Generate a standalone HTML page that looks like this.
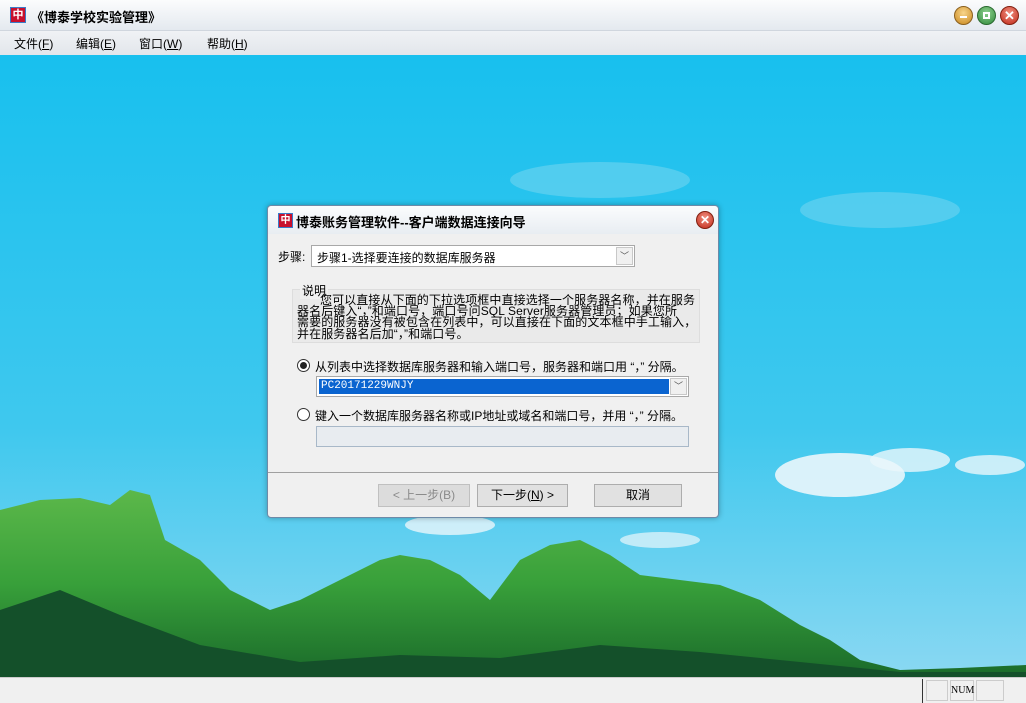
<!DOCTYPE html>
<html><head><meta charset="utf-8"><style>
*{margin:0;padding:0;box-sizing:border-box}
body{width:1026px;height:703px;overflow:hidden;font-family:"Liberation Sans","Noto Sans CJK SC",sans-serif;font-size:12px;color:#000;position:relative;background:#f0f0f0}
.abs{position:absolute}
#title{left:0;top:0;width:1026px;height:31px;background:linear-gradient(#fbfcfd,#e4e9ef);border-bottom:1px solid #d0d6de}
#menu{left:0;top:31px;width:1026px;height:24px;background:linear-gradient(#f0f2f5,#e2e6eb)}
#menu span{position:absolute;top:4px;font-size:12px}
#bg{left:0;top:55px;width:1026px;height:622px;overflow:hidden}
#status{left:0;top:677px;width:1026px;height:26px;background:#f0f0f0;border-top:1px solid #ccc}
.circ{position:absolute;top:6px;width:19px;height:19px;border-radius:50%}
#dlg{left:267px;top:205px;width:452px;height:313px;background:#f0f0f0;border:1px solid #6e8aa8;border-radius:4px;box-shadow:0 0 6px rgba(0,0,0,.3)}
#dlgtitle{left:0;top:0;width:450px;height:28px;background:linear-gradient(#fbfcfd,#e8edf2);border-radius:4px 4px 0 0}
.combo{position:absolute;background:#fff;border:1px solid #a8a8a8}
.dd{position:absolute;right:1px;top:1px;width:17px;background:#f0f0f0;border:1px solid #c8c8c8;font-size:9px;text-align:center;color:#555}
.btn{position:absolute;top:278px;height:23px;border:1px solid #adadad;background:#e1e1e1;text-align:center;line-height:21px;font-size:12px}
.radio{position:absolute;width:13px;height:13px;border:1px solid #333;border-radius:50%;background:#fff}
.ln{position:absolute;white-space:nowrap;font-size:12px;line-height:12px;letter-spacing:.1px}
</style></head><body>
<div id="title" class="abs">
 <div class="abs" style="left:10px;top:7px;width:16px;height:16px;background:#c8102e;border:1px solid #3a7bc8;color:#fff;font-size:11px;line-height:14px;text-align:center;font-weight:bold">中</div>
 <div class="abs" style="left:31px;top:7px;font-size:13px;font-weight:bold">《博泰学校实验管理》</div>
 <div class="circ" style="left:954px;background:radial-gradient(circle at 50% 35%,#f8d58a,#c8861c);border:1px solid #8a6020"><div style="position:absolute;left:5px;top:9px;width:7px;height:2px;background:#fff"></div></div>
 <div class="circ" style="left:977px;background:radial-gradient(circle at 50% 35%,#8fd08f,#2f8a3a);border:1px solid #2a6a30"><div style="position:absolute;left:5px;top:5px;width:7px;height:7px;border:2px solid #fff"></div></div>
 <div class="circ" style="left:1000px;background:radial-gradient(circle at 50% 35%,#f09080,#c02818);border:1px solid #802010;color:#fff;font-size:13px;font-weight:bold;text-align:center;line-height:17px">✕</div>
</div>
<div id="menu" class="abs">
 <span style="left:14px">文件(<u>F</u>)</span><span style="left:76px">编辑(<u>E</u>)</span><span style="left:139px">窗口(<u>W</u>)</span><span style="left:207px">帮助(<u>H</u>)</span>
</div>
<div id="bg" class="abs">
<svg width="1026" height="622" viewBox="0 55 1026 622">
<defs>
<linearGradient id="sky" x1="0" y1="0" x2="0" y2="1"><stop offset="0" stop-color="#18c0ee"/><stop offset=".6" stop-color="#3fc8ee"/><stop offset="1" stop-color="#8ad8f2"/></linearGradient>
<linearGradient id="m" x1="0" y1="0" x2="0" y2="1"><stop offset="0" stop-color="#5cb84a"/><stop offset=".5" stop-color="#38a03a"/><stop offset="1" stop-color="#1a6a2a"/></linearGradient>
</defs>
<rect x="0" y="55" width="1026" height="622" fill="url(#sky)"/>
<ellipse cx="840" cy="475" rx="65" ry="22" fill="#eaf6fb" opacity=".9"/>
<ellipse cx="910" cy="460" rx="40" ry="12" fill="#eaf6fb" opacity=".8"/>
<ellipse cx="990" cy="465" rx="35" ry="10" fill="#eaf6fb" opacity=".8"/>
<ellipse cx="450" cy="525" rx="45" ry="10" fill="#eaf6fb" opacity=".8"/>
<ellipse cx="660" cy="540" rx="40" ry="8" fill="#eaf6fb" opacity=".7"/>
<ellipse cx="600" cy="180" rx="90" ry="18" fill="#6fd4f0" opacity=".6"/>
<ellipse cx="880" cy="210" rx="80" ry="18" fill="#6fd4f0" opacity=".6"/>
<path d="M0 510 L40 500 L80 498 L110 505 L130 490 L150 495 L165 540 L200 560 L230 590 L270 610 L300 600 L330 585 L360 570 L380 560 L400 555 L430 560 L460 575 L490 600 L520 560 L550 545 L580 540 L610 555 L640 575 L680 580 L720 585 L760 600 L800 625 L830 640 L860 660 L900 670 L960 668 L1026 665 L1026 677 L0 677 Z" fill="url(#m)"/>
<path d="M0 610 L60 590 L120 615 L200 645 L300 662 L400 655 L500 658 L600 645 L700 652 L800 662 L900 672 L1026 672 L1026 677 L0 677Z" fill="#14502a"/>
</svg>
</div>
<div id="dlg" class="abs">
 <div id="dlgtitle" class="abs">
  <div class="abs" style="left:10px;top:7px;width:15px;height:15px;background:#c8102e;border:1px solid #3a7bc8;color:#fff;font-size:10px;line-height:13px;text-align:center;font-weight:bold">中</div>
  <div class="abs" style="left:28px;top:6px;font-size:13px;font-weight:bold">博泰账务管理软件--客户端数据连接向导</div>
  <div class="circ" style="left:428px;top:5px;width:18px;height:18px;background:radial-gradient(circle at 50% 35%,#f09080,#c02818);border:1px solid #802010;color:#fff;font-size:12px;font-weight:bold;text-align:center;line-height:16px">✕</div>
 </div>
 <div class="abs" style="left:10px;top:42px">步骤:</div>
 <div class="combo" style="left:43px;top:39px;width:324px;height:22px"><span style="position:absolute;left:5px;top:3px">步骤1-选择要连接的数据库服务器</span><div class="dd" style="height:18px;line-height:16px">﹀</div></div>
 <div class="abs" style="left:24px;top:83px;width:408px;height:54px;border:1px solid #ddd;background:#eaeaea"></div>
 <div class="abs" style="left:32px;top:76px;background:#f0f0f0;padding:0 2px">说明</div>
 <div class="ln" style="left:52px;top:88px">您可以直接从下面的下拉选项框中直接选择一个服务器名称，并在服务</div>
 <div class="ln" style="left:29px;top:99px">器名后键入“，”和端口号，端口号问SQL Server服务器管理员；如果您所</div>
 <div class="ln" style="left:29px;top:110px">需要的服务器没有被包含在列表中，可以直接在下面的文本框中手工输入，</div>
 <div class="ln" style="left:29px;top:122px">并在服务器名后加“，”和端口号。</div>
 <div class="radio" style="left:29px;top:153px"><div style="position:absolute;left:2px;top:2px;width:7px;height:7px;border-radius:50%;background:#222"></div></div>
 <div class="abs" style="left:47px;top:152px;white-space:nowrap">从列表中选择数据库服务器和输入端口号，服务器和端口用 “，” 分隔。</div>
 <div class="combo" style="left:48px;top:170px;width:373px;height:21px"><div style="position:absolute;left:2px;top:2px;width:350px;height:15px;background:#0a64d0;color:#fff;font-family:'Liberation Mono',monospace;font-size:11px;line-height:15px;padding-left:2px">PC20171229WNJY</div><div class="dd" style="height:17px;line-height:15px">﹀</div></div>
 <div class="radio" style="left:29px;top:202px"></div>
 <div class="abs" style="left:47px;top:201px;white-space:nowrap">键入一个数据库服务器名称或IP地址或域名和端口号，并用 “，” 分隔。</div>
 <div class="abs" style="left:48px;top:220px;width:373px;height:21px;border:1px solid #a8b8c8;background:#e8ecf0"></div>
 <div class="abs" style="left:0;top:266px;width:450px;border-top:1px solid #a0a0a0"></div>
 <div class="btn" style="left:110px;width:92px;color:#8a8a8a;background:#dcdcdc;border-color:#c0c0c0">&lt; 上一步(B)</div>
 <div class="btn" style="left:209px;width:91px">下一步(<u>N</u>) &gt;</div>
 <div class="btn" style="left:326px;width:88px">取消</div>
</div>
<div id="status" class="abs">
 <div class="abs" style="left:922px;top:1px;height:24px;border-left:1px solid #333"></div>
 <div class="abs" style="left:926px;top:2px;width:22px;height:21px;border:1px solid #ccc"></div>
 <div class="abs" style="left:950px;top:2px;width:24px;height:21px;border:1px solid #ccc;font-family:'Liberation Serif',serif;font-size:10px;text-align:center;line-height:19px">NUM</div>
 <div class="abs" style="left:976px;top:2px;width:28px;height:21px;border:1px solid #ccc"></div>
</div>
</body></html>
